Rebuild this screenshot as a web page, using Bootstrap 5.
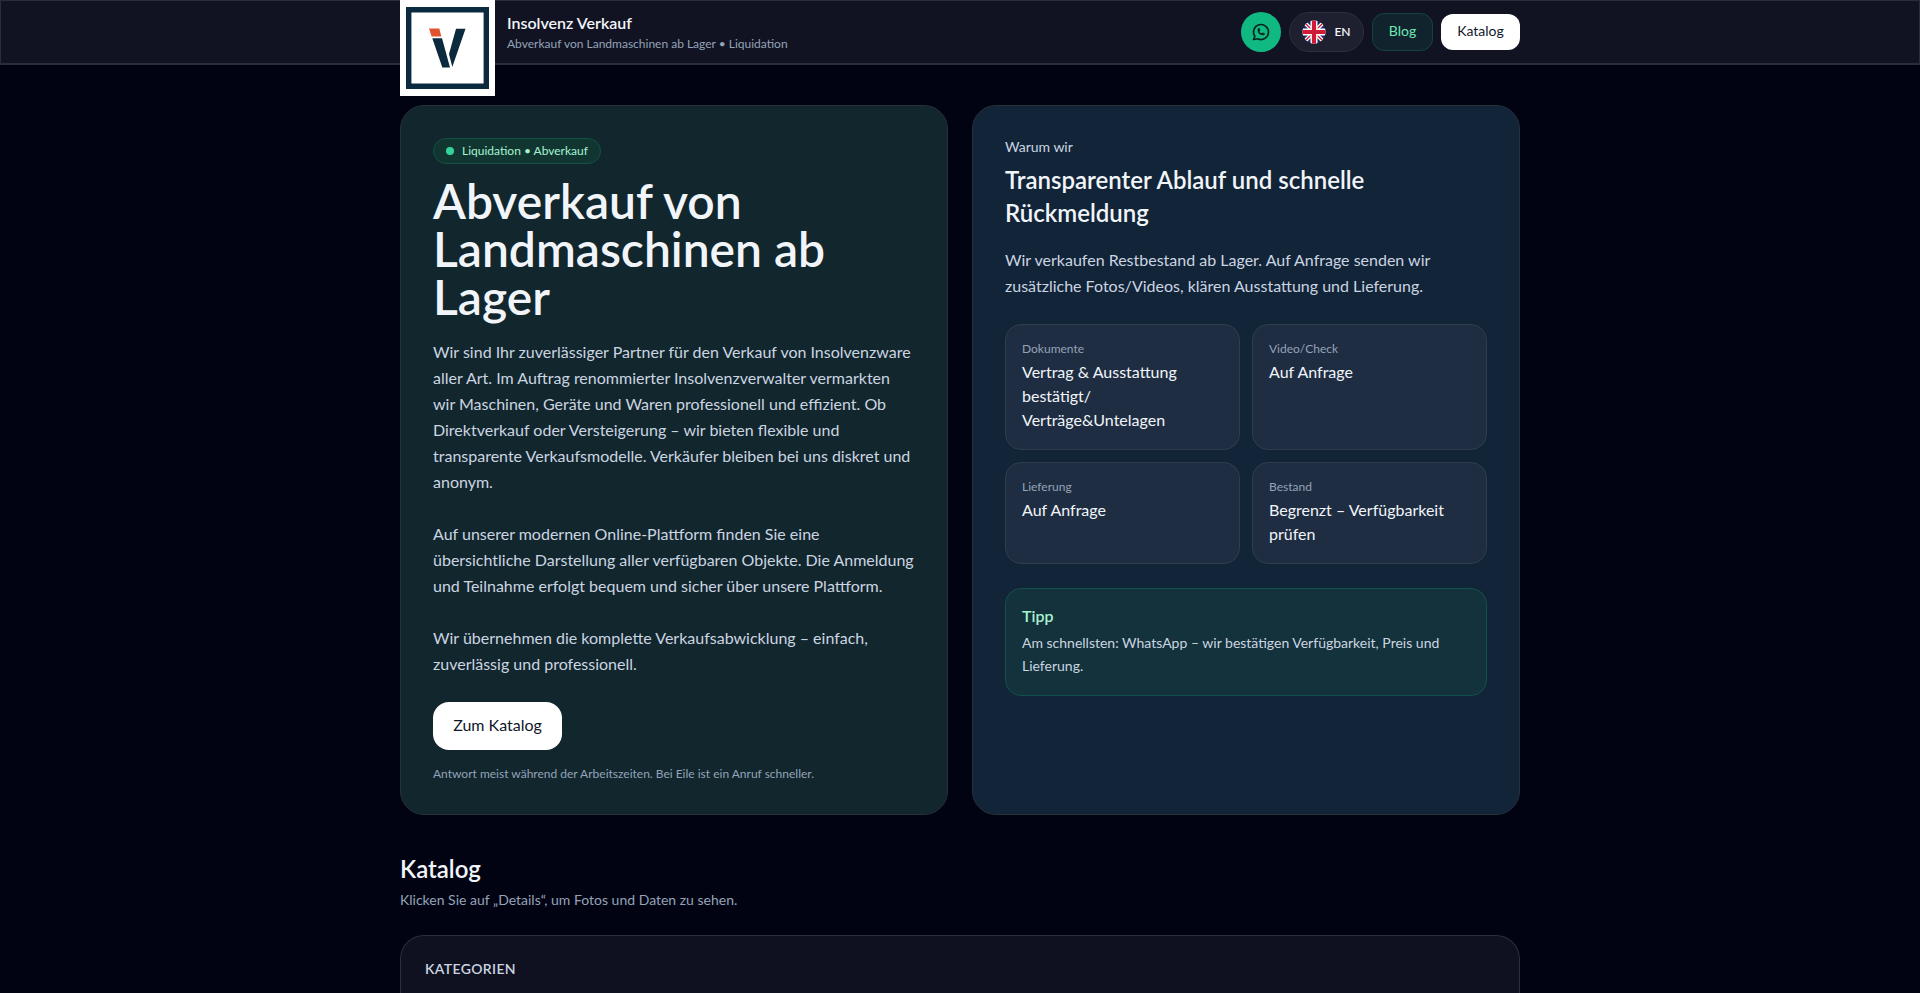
<!DOCTYPE html>
<html lang="de">
<head>
<meta charset="utf-8">
<meta name="viewport" content="width=device-width, initial-scale=1">
<title>Insolvenz Verkauf</title>
<link href="https://cdn.jsdelivr.net/npm/bootstrap@5.3.0/dist/css/bootstrap.min.css" rel="stylesheet">
<style>
body{background:#010313;color:#f1f5f9;font-family:Lato,sans-serif;font-size:16px;line-height:24px;overflow:hidden;height:993px}
.wrap{width:1120px;margin:0 auto}
.topbar{height:65px;background:#111322;border:1px solid #2a2c39;border-bottom-width:2px;margin-bottom:40px}
.topbar .wrap{height:62px}
.logo{width:95px;height:96px;margin-top:-1px;position:relative;z-index:2;display:block}
.brand{font-weight:600;line-height:24px;margin-top:2px}
.tagline{font-size:12px;line-height:16px;color:#94a3b8;margin-top:1px}
.pill{border:1px solid #2c2e3c;background:#1e2030;border-radius:20px;height:40px;width:75px;font-size:12px;font-weight:600;color:#f1f5f9}
.wa{width:40px;height:40px;border-radius:50%;background:#10b981}
.btn-blog{width:61px;height:38px;border:1px solid #12443f;background:#11242d;color:#6ee7b7;border-radius:12px;font-size:14px;padding-bottom:2px}
.btn-kat{width:79px;height:36px;background:#fff;color:#0f172a;border-radius:12px;font-size:14px;padding-bottom:2px}
.panel{border:1px solid #26313b;border-radius:24px;padding:32px;height:710px;width:548px}
.p-green{background:#12262d}
.p-blue{background:#122438}
.chip{height:26px;border:1px solid #15513f;background:#113632;border-radius:13px;font-size:12px;color:#a7f3d0;padding:0 12px}
.dot{width:8px;height:8px;border-radius:50%;background:#34d399}
h1{font-size:48px;line-height:48px;font-weight:600;margin:13px 0 18px}
h2{font-size:24px;font-weight:600;margin:0}
.body-text{line-height:26px;color:#cbd5e1;margin:0}
.pre{white-space:pre-line}
.btn-main{height:48px;width:129px;border-radius:16px;background:#fff;color:#0f172a;margin-top:25px;padding-bottom:2px}
.note{font-size:12px;line-height:16px;color:#94a3b8;margin-top:16px}
.facts{display:grid;grid-template-columns:1fr 1fr;gap:12px;margin-top:25px}
.fact{border:1px solid #2f3e4d;background:#1f2d42;border-radius:16px;padding:16px 16px 17px}
.fact span{display:block;font-size:12px;line-height:16px;color:#94a3b8;margin-bottom:3px}
.tip{border:1px solid #12504d;background:#14323b;border-radius:16px;padding:15px 16px;margin-top:24px;height:108px}
.tip b{display:block;color:#a7f3d0;font-weight:600;margin-bottom:3px}
.tip p{font-size:14px;line-height:23px;color:#cbd5e1;margin:0}
.warum{font-size:14px;line-height:20px;color:#cbd5e1;margin-top:-1px}
.why{line-height:33px;margin:6px 0 18px}
.cat{line-height:32px;margin-top:38px}
.catsub{font-size:14px;line-height:23px;color:#94a3b8;margin:3px 0 24px}
.catbox{border:1px solid #2c2e3b;border-bottom:0;background:#0f1120;border-radius:24px 24px 0 0;padding:23px 24px 0;height:58px;font-size:14px;line-height:20px;font-weight:600;letter-spacing:.35px;color:#cbd5e1}
</style>
</head>
<body>
<header class="topbar">
  <div class="wrap d-flex align-items-center justify-content-between">
    <div class="d-flex align-items-start align-self-start">
      <svg class="logo" viewBox="0 0 95 96"><path fill="#fff" d="M0 0h95v96H0z"/><path fill="none" stroke="#0b2a3e" stroke-width="5.4" d="M8.700 9.700h77.600v76.600H8.700z"/><path fill="#e0532f" d="M29 28.500h10.300l2 8h-9.700z"/><path fill="#0b2a3e" d="M32.300 38.300h9.700l8 29.300h-7.700zM56 28.700h9.500L52.300 67 49 54z"/></svg>
      <div class="ms-2 ps-1 pt-2"><div class="brand">Insolvenz Verkauf</div><div class="tagline">Abverkauf von Landmaschinen ab Lager • Liquidation</div></div>
    </div>
    <nav class="d-flex align-items-center gap-2">
      <a class="wa d-flex align-items-center justify-content-center" aria-label="WhatsApp"><svg width="20" height="20" viewBox="0 0 24 24" fill="none" stroke="#06251d" stroke-width="2" stroke-linecap="round" stroke-linejoin="round"><path d="M3 21l1.650-3.800a9 9 0 1 1 3.400 2.900L3 21"/><path d="M9 10a.5.5 0 0 0 1 0V9a.5.5 0 0 0-1 0v1a5 5 0 0 0 5 5h1a.5.5 0 0 0 0-1h-1a.5.5 0 0 0 0 1"/></svg></a>
      <a class="pill d-flex align-items-center justify-content-center gap-2 text-decoration-none"><svg width="24" height="24" viewBox="0 0 24 24"><defs><clipPath id="c"><circle cx="12" cy="12" r="11.500"/></clipPath></defs><g clip-path="url(#c)"><path fill="#1b2a6b" d="M0 0h24v24H0z"/><path stroke="#fff" stroke-width="4" d="M0 0l24 24M24 0L0 24"/><path stroke="#cf1b35" stroke-width="1.400" d="M0 0l24 24M24 0L0 24"/><path stroke="#fff" stroke-width="7" d="M12 0v24M0 12h24"/><path stroke="#cf1b35" stroke-width="4.200" d="M12 0v24M0 12h24"/></g></svg>EN</a>
      <a class="btn-blog d-flex align-items-center justify-content-center text-decoration-none">Blog</a>
      <a class="btn-kat d-flex align-items-center justify-content-center text-decoration-none">Katalog</a>
    </nav>
  </div>
</header>
<main class="wrap">
  <div class="d-flex gap-4">
    <section class="panel p-green d-flex flex-column align-items-start">
      <div class="chip d-inline-flex align-items-center gap-2"><i class="dot"></i>Liquidation • Abverkauf</div>
      <h1>Abverkauf von Landmaschinen ab Lager</h1>
      <p class="body-text pre">Wir sind Ihr zuverlässiger Partner für den Verkauf von Insolvenzware aller Art. Im Auftrag renommierter Insolvenzverwalter vermarkten wir Maschinen, Geräte und Waren professionell und effizient. Ob Direktverkauf oder Versteigerung – wir bieten flexible und transparente Verkaufsmodelle. Verkäufer bleiben bei uns diskret und anonym.

Auf unserer modernen Online-Plattform finden Sie eine übersichtliche Darstellung aller verfügbaren Objekte. Die Anmeldung und Teilnahme erfolgt bequem und sicher über unsere Plattform.

Wir übernehmen die komplette Verkaufsabwicklung – einfach, zuverlässig und professionell.</p>
      <a class="btn-main d-flex align-items-center justify-content-center text-decoration-none">Zum Katalog</a>
      <div class="note">Antwort meist während der Arbeitszeiten. Bei Eile ist ein Anruf schneller.</div>
    </section>
    <section class="panel p-blue">
      <div class="warum">Warum wir</div>
      <h2 class="why">Transparenter Ablauf und schnelle Rückmeldung</h2>
      <p class="body-text">Wir verkaufen Restbestand ab Lager. Auf Anfrage senden wir zusätzliche Fotos/Videos, klären Ausstattung und Lieferung.</p>
      <div class="facts">
        <div class="fact"><span>Dokumente</span>Vertrag &amp; Ausstattung bestätigt/ Verträge&amp;Untelagen</div>
        <div class="fact"><span>Video/Check</span>Auf Anfrage</div>
        <div class="fact"><span>Lieferung</span>Auf Anfrage</div>
        <div class="fact"><span>Bestand</span>Begrenzt – Verfügbarkeit prüfen</div>
      </div>
      <div class="tip"><b>Tipp</b><p>Am schnellsten: WhatsApp – wir bestätigen Verfügbarkeit, Preis und Lieferung.</p></div>
    </section>
  </div>
  <h2 class="cat">Katalog</h2>
  <p class="catsub">Klicken Sie auf „Details“, um Fotos und Daten zu sehen.</p>
  <div class="catbox">KATEGORIEN</div>
</main>
<script src="https://cdn.jsdelivr.net/npm/bootstrap@5.3.0/dist/js/bootstrap.bundle.min.js"></script>
</body>
</html>
